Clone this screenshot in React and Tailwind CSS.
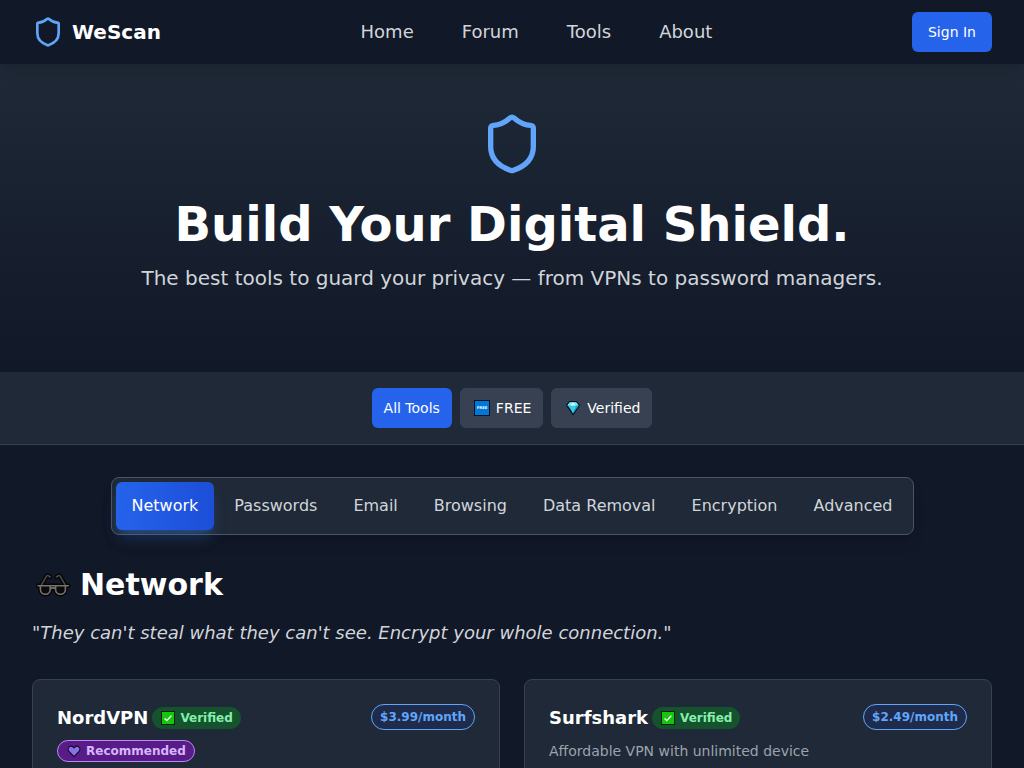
import React, { useState } from 'react';
import { Shield } from 'lucide-react';

const navLinks = ['Home', 'Forum', 'Tools', 'About'];

const categories = ['Network', 'Passwords', 'Email', 'Browsing', 'Data Removal', 'Encryption', 'Advanced'];

const tools = [
  { name: 'NordVPN', price: '$3.99/month', recommended: true },
  { name: 'Surfshark', price: '$2.49/month', description: 'Affordable VPN with unlimited device' }
];

const FreeIcon = () => (
  <svg viewBox="0 0 20 20" className="w-5 h-5" aria-hidden="true">
    <rect x="2" y="2" width="16" height="16" fill="#06101c" />
    <rect x="3" y="3" width="14" height="14" fill="#0078d7" />
    <text x="10" y="11.4" textAnchor="middle" fontSize="3.8" fontWeight="bold" fill="#ffffff">FREE</text>
  </svg>
);

const GemIcon = () => (
  <svg viewBox="0 0 20 20" className="w-5 h-5" aria-hidden="true">
    <path d="M6.6 3.6h6.8l3 3.6L10 16.4 3.6 7.2z" fill="#22b8e0" stroke="#08121c" strokeWidth="1.4" strokeLinejoin="round" />
    <path d="M6.8 4.2h6.4l2.6 3.2H4.2z" fill="#7fe3f7" />
    <path d="M6.8 7.4h6.4L10 15.4z" fill="#35cdf0" />
    <path d="M10 4.2l2.8 3.2H7.2z" fill="#d5f8ff" />
    <path d="M13.2 7.4h2.6L10 15.4z" fill="#1ba3d2" />
  </svg>
);

const CheckIcon = () => (
  <svg viewBox="0 0 16 16" className="w-4 h-4" aria-hidden="true">
    <rect x="1" y="1" width="14" height="14" fill="#06210c" />
    <rect x="2" y="2" width="12" height="12" fill="#16c60c" />
    <path d="M4.6 8.4l2.2 2.2 4.6-5" fill="none" stroke="#ffffff" strokeWidth="1.4" />
  </svg>
);

const HeartIcon = () => (
  <svg viewBox="0 0 16 16" className="w-4 h-4" aria-hidden="true">
    <path
      d="M8 13.6L2.9 8.3C1.2 6.5 2.2 3.3 4.9 3.1 6.4 3 7.4 3.9 8 5c.6-1.1 1.6-2 3.1-1.9 2.7.2 3.7 3.4 2 5.2z"
      fill="#8a70e6"
      stroke="#160a2a"
      strokeWidth="1.1"
      strokeLinejoin="round"
    />
  </svg>
);

const glassesArms = 'M9.6 15.6l4.6-8q1-1.6 2.4-.8l1.6 1.2M33 15.6l-4.6-8q-1-1.6-2.4-.8l-1.6 1.2';
const glassesFrame = 'M6 16.8h30.4M18.2 19.8q3-1.8 5.4 0M8.4 17v3.4a4.9 4.9 0 0 0 9.8 0V17M23.6 17v3.4a4.9 4.9 0 0 0 9.8 0V17';

const GlassesIcon = () => (
  <svg viewBox="0 0 40 32" className="w-10 h-8" fill="none" strokeLinecap="round" strokeLinejoin="round" aria-hidden="true">
    <g stroke="#050505" strokeWidth="4.4">
      <path d={glassesArms} />
      <path d={glassesFrame} />
    </g>
    <path d="M8.4 17v3.4a4.9 4.9 0 0 0 9.8 0V17zM23.6 17v3.4a4.9 4.9 0 0 0 9.8 0V17z" fill="#0b0b0c" />
    <g stroke="#77726f" strokeWidth="1.6">
      <path d={glassesArms} stroke="#4d4a48" />
      <path d={glassesFrame} />
    </g>
  </svg>
);

const filters = [
  { id: 'all', label: 'All Tools' },
  { id: 'free', label: 'FREE', icon: FreeIcon },
  { id: 'verified', label: 'Verified', icon: GemIcon }
];

const ToolCard = ({ tool }) => (
  <article className="bg-[#1f2937] border border-[#374151] rounded-lg p-6">
    <div className="flex items-start justify-between mb-2">
      <div className="flex flex-wrap items-center gap-1">
        <h3 className="text-lg font-semibold text-white">{tool.name}</h3>
        <span className="flex items-center gap-1 px-2 py-[3px] rounded-full bg-[#14532d] text-[#86efac] text-xs font-bold">
          <CheckIcon />
          Verified
        </span>
      </div>
      <span className="px-2 py-1 rounded-full border border-[#60a5fa] bg-[#1e2b4b] text-[#60a5fa] text-xs font-bold">
        {tool.price}
      </span>
    </div>
    {tool.recommended && (
      <span className="flex w-fit items-center gap-1 px-2 py-0.5 rounded-full border border-[#c084fc] bg-[#581c87] text-[#d8b4fe] text-xs font-bold">
        <HeartIcon />
        Recommended
      </span>
    )}
    {tool.description && <p className="text-sm leading-[22px] text-[#9ca3af]">{tool.description}</p>}
  </article>
);

export default function App() {
  const [filter, setFilter] = useState('all');
  const [category, setCategory] = useState('Network');

  return (
    <div className="min-h-screen bg-[#111827] text-white font-['DejaVu_Sans',sans-serif]">
      <header className="relative z-10 flex items-center justify-between h-16 px-8 bg-[#111827] shadow-lg">
        <a href="#" className="flex items-center gap-2 text-xl font-bold">
          <Shield className="w-8 h-8 text-[#60a5fa]" />
          WeScan
        </a>
        <nav className="flex gap-12 text-lg text-[#d1d5db]">
          {navLinks.map((link) => (
            <a key={link} href="#">{link}</a>
          ))}
        </nav>
        <button className="h-10 px-4 rounded-md bg-[#2563eb] text-sm">Sign In</button>
      </header>

      <section className="pt-12 pb-20 text-center bg-linear-to-b/srgb from-[#1f2937] to-[#111827]">
        <Shield className="w-16 h-16 mx-auto mb-6 text-[#60a5fa]" />
        <h1 className="text-5xl font-bold mb-4">Build Your Digital Shield.</h1>
        <p className="text-xl text-[#d1d5db]">The best tools to guard your privacy — from VPNs to password managers.</p>
      </section>

      <div className="flex justify-center gap-2 py-4 bg-[#1f2937] border-b border-[#374151]">
        {filters.map(({ id, label, icon: Icon }) => (
          <button
            key={id}
            onClick={() => setFilter(id)}
            className={`flex items-center gap-1 h-10 px-3 rounded-md text-sm ${filter === id ? 'bg-[#2563eb]' : 'bg-[#374151]'}`}
          >
            {Icon && <Icon />}
            {label}
          </button>
        ))}
      </div>

      <main className="px-8 py-8">
        <div className="flex w-fit mx-auto p-1 mb-8 gap-1 bg-[#1f2937] border border-[#4b5563] rounded-lg shadow-lg">
          {categories.map((item) => (
            <button
              key={item}
              onClick={() => setCategory(item)}
              className={`h-12 px-4 rounded-md ${
                category === item
                  ? 'bg-linear-to-r/srgb from-[#2563eb] to-[#1d4ed8] shadow-lg shadow-[#3b82f6]/30'
                  : 'text-[#d1d5db]'
              }`}
            >
              {item}
            </button>
          ))}
        </div>

        <h2 className="flex items-center gap-2 text-3xl font-bold mb-4">
          <GlassesIcon />
          Network
        </h2>
        <p className="text-lg italic text-[#d1d5db] mb-8">
          "They can't steal what they can't see. Encrypt your whole connection."
        </p>

        <div className="grid grid-cols-2 gap-6">
          {tools.map((tool) => (
            <ToolCard key={tool.name} tool={tool} />
          ))}
        </div>
      </main>
    </div>
  );
}
